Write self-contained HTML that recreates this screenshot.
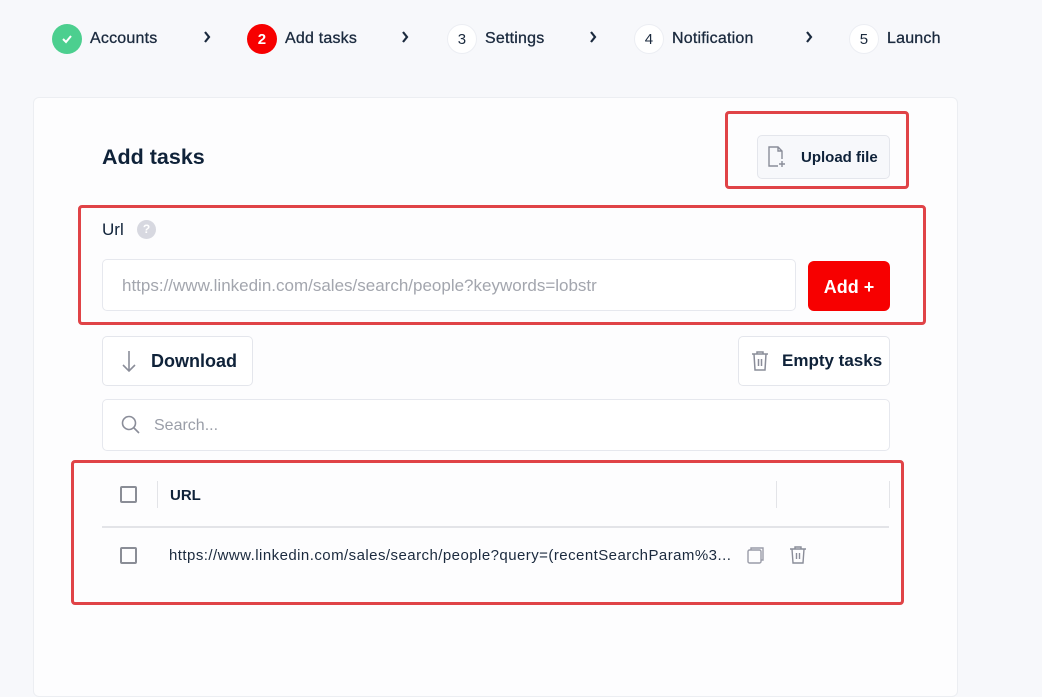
<!DOCTYPE html>
<html><head><meta charset="utf-8"><style>
*{box-sizing:border-box;margin:0;padding:0}
body{width:1042px;height:664px;background:#f7f8fb;font-family:"Liberation Sans",sans-serif;color:#0f2239;position:relative;overflow:hidden}
.a{position:absolute}
.step{position:absolute;top:24px;height:30px;display:flex;align-items:center;font-size:16px;color:#1b2a3e;-webkit-text-stroke:0.3px #1b2a3e;letter-spacing:0.2px}
.circ{width:30px;height:30px;border-radius:50%;display:flex;align-items:center;justify-content:center;font-size:15px;margin-right:8px;background:#fff;border:1px solid #eceef3;color:#1b2a3e;-webkit-text-stroke:0}
.chev{position:absolute;top:31px}
.card{left:33px;top:97px;width:925px;height:600px;background:#fdfdfe;border:1px solid #eceef2;border-radius:6px}
.red{position:absolute;border:3px solid #e04347;border-radius:4px}
.btn{position:absolute;background:#fff;border:1px solid #e4e6ec;border-radius:5px;display:flex;align-items:center;font-weight:bold;font-size:18px;color:#0f2239}
.cb{position:absolute;width:17px;height:17px;border:2px solid #8a8d96;border-radius:2px}
</style></head><body>
<div class="step" style="left:52px"><div class="circ" style="background:#4ccf8f;border:none;color:#fff"><svg width="12" height="10" viewBox="0 0 12 10"><path d="M2 5l3 3 5-6" stroke="#fff" stroke-width="2" fill="none"/></svg></div>Accounts</div>
<svg class="chev" style="left:203px" width="8" height="12" viewBox="0 0 8 12"><path d="M2 1l4 5-4 5" stroke="#1b2a3e" stroke-width="2.2" fill="none"/></svg>
<div class="step" style="left:247px"><div class="circ" style="background:#f70000;border:none;color:#fff;font-weight:bold">2</div>Add tasks</div>
<svg class="chev" style="left:401px" width="8" height="12" viewBox="0 0 8 12"><path d="M2 1l4 5-4 5" stroke="#1b2a3e" stroke-width="2.2" fill="none"/></svg>
<div class="step" style="left:447px"><div class="circ">3</div>Settings</div>
<svg class="chev" style="left:589px" width="8" height="12" viewBox="0 0 8 12"><path d="M2 1l4 5-4 5" stroke="#1b2a3e" stroke-width="2.2" fill="none"/></svg>
<div class="step" style="left:634px"><div class="circ">4</div>Notification</div>
<svg class="chev" style="left:805px" width="8" height="12" viewBox="0 0 8 12"><path d="M2 1l4 5-4 5" stroke="#1b2a3e" stroke-width="2.2" fill="none"/></svg>
<div class="step" style="left:849px"><div class="circ">5</div>Launch</div>

<div class="a card"></div>
<div class="a" style="left:102px;top:145px;font-size:21.5px;font-weight:bold">Add tasks</div>
<div class="red" style="left:725px;top:111px;width:184px;height:78px"></div>
<div class="btn" style="left:757px;top:135px;width:133px;height:44px;background:#f7f8fb;font-size:15px"><svg style="margin:0 13px 0 8px" width="22" height="24" viewBox="0 0 22 24"><path d="M12 21H3V2h9l4 4v8M12 2v4h4M16 16v6M13 19h6" stroke="#8a8d99" stroke-width="1.4" fill="none"/></svg>Upload file</div>

<div class="red" style="left:78px;top:205px;width:848px;height:120px"></div>
<div class="a" style="left:102px;top:220px;font-size:17px">Url</div>
<div class="a" style="left:137px;top:220px;width:19px;height:19px;border-radius:50%;background:#d7d8e0;color:#fff;font-size:12px;font-weight:bold;text-align:center;line-height:19px">?</div>
<div class="a" style="left:102px;top:259px;width:694px;height:52px;background:#fff;border:1px solid #e6e8ee;border-radius:5px;padding-left:19px;line-height:52px;font-size:17px;color:#a3a6ae">https://www.linkedin.com/sales/search/people?keywords=lobstr</div>
<div class="a" style="left:808px;top:261px;width:82px;height:50px;background:#f70000;border-radius:6px;color:#fff;font-weight:bold;font-size:18px;text-align:center;line-height:52px">Add +</div>

<div class="btn" style="left:102px;top:336px;width:151px;height:50px"><svg style="margin:0 14px 0 18px" width="16" height="24" viewBox="0 0 16 24"><path d="M8 2v20M2 16l6 6 6-6" stroke="#8a8d99" stroke-width="1.6" fill="none"/></svg>Download</div>
<div class="btn" style="left:738px;top:336px;width:152px;height:50px;font-size:17px"><svg style="margin:0 12px 0 11px" width="20" height="22" viewBox="0 0 20 22"><path d="M2 4h16M7 4V2h6v2M4 4l1 16h10l1-16M8.5 9v7M11.5 9v7" stroke="#8a8d99" stroke-width="1.5" fill="none"/></svg>Empty tasks</div>

<div class="a" style="left:102px;top:399px;width:788px;height:52px;background:#fff;border:1px solid #e6e8ee;border-radius:5px"></div>
<svg class="a" style="left:121px;top:415px" width="20" height="20" viewBox="0 0 20 20"><circle cx="8" cy="8" r="6.5" stroke="#8a8d99" stroke-width="1.6" fill="none"/><path d="M13 13l5 5" stroke="#8a8d99" stroke-width="1.6"/></svg>
<div class="a" style="left:154px;top:417px;font-size:16px;color:#9a9ea8">Search...</div>

<div class="red" style="left:71px;top:460px;width:833px;height:145px"></div>
<div class="cb" style="left:120px;top:486px"></div>
<div class="a" style="left:157px;top:481px;width:1px;height:27px;background:#e3e4e8"></div>
<div class="a" style="left:776px;top:481px;width:1px;height:27px;background:#e3e4e8"></div>
<div class="a" style="left:889px;top:481px;width:1px;height:27px;background:#e3e4e8"></div>
<div class="a" style="left:170px;top:487px;font-size:15px;font-weight:bold">URL</div>
<div class="a" style="left:102px;top:526px;width:787px;height:2px;background:#e3e4e8"></div>
<div class="cb" style="left:120px;top:547px"></div>
<div class="a" style="left:169px;top:547px;font-size:15px;color:#1b2a3e;letter-spacing:0.45px;white-space:nowrap">https://www.linkedin.com/sales/search/people?query=(recentSearchParam%3...</div>
<svg class="a" style="left:746px;top:545px" width="20" height="20" viewBox="0 0 20 20"><rect x="2" y="5" width="13" height="13" rx="1.5" stroke="#9a9ca8" stroke-width="1.4" fill="none"/><path d="M5 5V3h12v12h-2" stroke="#9a9ca8" stroke-width="1.4" fill="none"/></svg>
<svg class="a" style="left:789px;top:545px" width="18" height="20" viewBox="0 0 18 20"><path d="M1 4h16M6 4V2h6v2M3 4l1 14h10l1-14M7.5 8v6M10.5 8v6" stroke="#8a8d99" stroke-width="1.4" fill="none"/></svg>
</body></html>
